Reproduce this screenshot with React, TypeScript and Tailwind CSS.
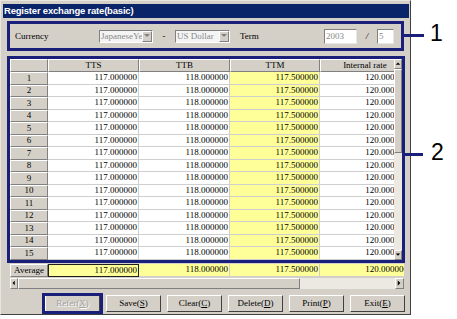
import React from "react";

const NAVY = "border-[#1a1f7a]";
const rows = Array.from({ length: 15 }, (_, i) => i + 1);

function HeadCell({ w, children }: { w: string; children?: React.ReactNode }) {
  return (
    <div
      className={`${w} shrink-0 h-full bg-[#d4d0c8] border-t border-l border-t-white border-l-white border-r border-b border-r-[#808080] border-b-[#808080] flex items-center justify-center whitespace-nowrap overflow-hidden`}
    >
      {children}
    </div>
  );
}

function Cell({ w, v, y }: { w: string; v: string; y?: boolean }) {
  return (
    <div
      className={`${w} shrink-0 h-full border-r border-b border-[#cfcfcf] ${
        y ? "bg-[#ffff99]" : "bg-white"
      } flex items-center justify-end pr-[1px] whitespace-nowrap`}
    >
      {v}
    </div>
  );
}

function Btn({ label, u, disabled }: { label: string; u: string; disabled?: boolean }) {
  return (
    <div className="w-[55px] h-[17px] shrink-0 bg-[#d4d0c8] border border-t-white border-l-white border-r-[#404040] border-b-[#404040] flex items-center justify-center">
      <span className={disabled ? "text-[#a0a0a0] [text-shadow:1px_1px_0_#fff]" : "text-black"}>
        {label}(<span className="underline">{u}</span>)
      </span>
    </div>
  );
}

function Arrow({ dir, gray }: { dir: "up" | "down" | "left" | "right"; gray?: boolean }) {
  const c = gray ? "#808080" : "#000";
  const pts =
    dir === "up"
      ? "1,5 4,2 7,5"
      : dir === "down"
      ? "1,2 4,5 7,2"
      : dir === "left"
      ? "5,1 2,4 5,7"
      : "2,1 5,4 2,7";
  return (
    <svg width="8" height="8" viewBox="0 0 8 8">
      <polygon points={pts} fill={c} />
    </svg>
  );
}

function Combo({ w, text }: { w: string; text: string }) {
  return (
    <div className={`${w} h-[13px] shrink-0 flex bg-[#f4f4f4] border border-t-[#808080] border-l-[#808080] border-r-white border-b-white`}>
      <div className="flex-1 overflow-hidden whitespace-nowrap text-[#8a8a8a] flex items-center pl-[1px]">{text}</div>
      <div className="w-[10px] h-full bg-[#d4d0c8] border border-t-white border-l-white border-r-[#808080] border-b-[#808080] flex items-center justify-center">
        <Arrow dir="down" gray />
      </div>
    </div>
  );
}

function Input({ w, text }: { w: string; text: string }) {
  return (
    <div className={`${w} h-[15px] shrink-0 bg-white border border-t-[#808080] border-l-[#808080] border-r-[#e8e8e8] border-b-[#e8e8e8] flex items-center pl-[1px] text-[#8a8a8a]`}>
      {text}
    </div>
  );
}

export default function App() {
  return (
    <div className="w-[457px] h-[319px] bg-white relative overflow-hidden font-['Liberation_Serif',serif] text-[9px] leading-none text-black">
      {/* window */}
      <div className="w-[411px] h-[315px] bg-[#d4d0c8] border border-t-[#e8e6e0] border-l-[#e8e6e0] border-r-[#404040] border-b-[#404040] pt-[3px] pl-[2px] pr-[1px] flex flex-col">
        <div className="h-[14px] w-[406px] bg-[#0a246a] text-white font-['Liberation_Sans',sans-serif] font-bold text-[9.5px] tracking-[-0.2px] flex items-center pl-[1px]">
          Register exchange rate(basic)
        </div>

        {/* box 1 */}
        <div className={`mt-[3px] ml-[4px] w-[397px] h-[30px] border-[3px] ${NAVY} flex items-center pl-[5px]`}>
          <div className="w-[84px] shrink-0">Currency</div>
          <Combo w="w-[54px]" text="JapaneseYe" />
          <div className="w-[22px] text-center shrink-0">-</div>
          <Combo w="w-[55px]" text="US Dollar" />
          <div className="ml-[10px] w-[84px] shrink-0">Term</div>
          <Input w="w-[33px]" text="2003" />
          <div className="w-[20px] text-center shrink-0 italic">/</div>
          <Input w="w-[17px]" text="5" />
        </div>

        {/* box 2 grid */}
        <div className={`mt-[5px] ml-[4px] w-[398px] h-[206.5px] border-[3px] ${NAVY} flex`}>
          <div className="flex-1 overflow-hidden flex flex-col">
            <div className="flex h-[13px]">
              <HeadCell w="w-[38px]" />
              <HeadCell w="w-[91px]">TTS</HeadCell>
              <HeadCell w="w-[91px]">TTB</HeadCell>
              <HeadCell w="w-[90px]">TTM</HeadCell>
              <HeadCell w="w-[90px]">Internal rate</HeadCell>
            </div>
            {rows.map((n) => (
              <div key={n} className="flex h-[12.5px]">
                <HeadCell w="w-[38px]">{n}</HeadCell>
                <Cell w="w-[91px]" v="117.000000" />
                <Cell w="w-[91px]" v="118.000000" />
                <Cell w="w-[90px]" v="117.500000" y />
                <Cell w="w-[90px]" v="120.000000" />
              </div>
            ))}
          </div>
          <div className="w-[8px] shrink-0 flex flex-col bg-[#ece9e2]">
            <div className="h-[10px] bg-[#d4d0c8] border border-t-white border-l-white border-r-[#808080] border-b-[#808080] flex items-center justify-center">
              <Arrow dir="up" />
            </div>
            <div className="h-[84px] bg-[#d4d0c8] border border-t-white border-l-white border-r-[#808080] border-b-[#808080]" />
            <div className="flex-1" />
            <div className="h-[10px] bg-[#d4d0c8] border border-t-white border-l-white border-r-[#808080] border-b-[#808080] flex items-center justify-center">
              <Arrow dir="down" />
            </div>
          </div>
        </div>

        {/* average row */}
        <div className="mt-[1px] ml-[7px] w-[394px] h-[13px] flex overflow-hidden">
          <HeadCell w="w-[38px]">Average</HeadCell>
          <div className="w-[91px] shrink-0 h-full bg-[#ffff99] border border-[#202020] flex items-center justify-end pr-[1px]">117.000000</div>
          <Cell w="w-[91px]" v="118.000000" y />
          <Cell w="w-[90px]" v="117.500000" y />
          <Cell w="w-[90px]" v="120.000000" y />
        </div>

        {/* horizontal scrollbar */}
        <div className="mt-[1px] ml-[7px] w-[394px] h-[11px] flex bg-[#ece9e2]">
          <div className="w-[8px] h-full bg-[#d4d0c8] border border-t-white border-l-white border-r-[#808080] border-b-[#808080] flex items-center justify-center">
            <Arrow dir="left" />
          </div>
          <div className="w-[282px] h-full bg-[#d4d0c8] border border-t-white border-l-white border-r-[#808080] border-b-[#808080]" />
          <div className="flex-1" />
          <div className="w-[9px] h-full bg-[#d4d0c8] border border-t-white border-l-white border-r-[#808080] border-b-[#808080] flex items-center justify-center">
            <Arrow dir="right" />
          </div>
        </div>

        {/* buttons */}
        <div className="mt-[6px] ml-[42px] flex gap-[6px] relative">
          <Btn label="Refer" u="X" disabled />
          <Btn label="Save" u="S" />
          <Btn label="Clear" u="C" />
          <Btn label="Delete" u="D" />
          <Btn label="Print" u="P" />
          <Btn label="Exit" u="E" />
          <div className={`absolute left-[-3px] top-[-2px] w-[61px] h-[21px] border-[3px] ${NAVY}`} />
        </div>
      </div>

      {/* annotations */}
      <div className="absolute left-[404px] top-[34px] w-[20px] h-[3px] bg-[#1a1f7a]" />
      <div className="absolute left-[430px] top-[22px] font-['Liberation_Sans',sans-serif] text-[23px] leading-none">1</div>
      <div className="absolute left-[402px] top-[153px] w-[21px] h-[3px] bg-[#1a1f7a]" />
      <div className="absolute left-[431px] top-[141px] font-['Liberation_Sans',sans-serif] text-[23px] leading-none">2</div>
    </div>
  );
}
